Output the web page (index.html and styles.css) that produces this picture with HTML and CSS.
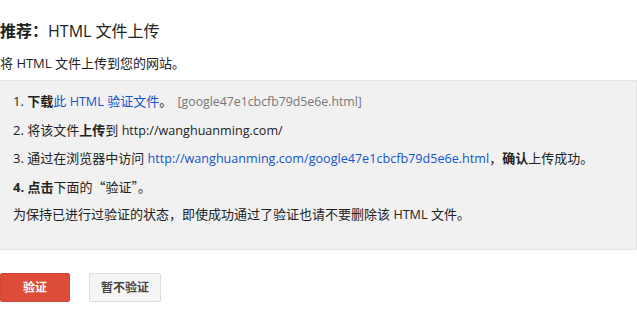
FILE: index.html
```html
<!DOCTYPE html>
<html lang="zh-CN">
<head>
<meta charset="utf-8">
<link rel="stylesheet" href="styles.css">
</head>
<body>
<div class="page">
  <h2 class="title"><b>推荐：</b>HTML 文件上传</h2>
  <p class="intro">将 HTML 文件上传到您的网站。</p>
  <div class="steps">
    <ol class="list">
      <li>1. <b>下载</b><a href="#">此 <span class="en">HTML</span> 验证文件</a>。 <span class="file en">[google47e1cbcfb79d5e6e.html]</span></li>
      <li>2. 将该文件<b>上传</b>到 <span class="en">http://wanghuanming.com/</span></li>
      <li>3. 通过在浏览器中访问 <a href="#" class="en">http://wanghuanming.com/google47e1cbcfb79d5e6e.html</a>，<b>确认</b>上传成功。</li>
      <li><b>4. 点击</b>下面的<span class="cjk">“验证”</span>。</li>
    </ol>
    <p class="note">为保持已进行过验证的状态，即使成功通过了验证也请不要删除该 <span class="en">HTML</span> 文件。</p>
  </div>
  <div class="actions">
    <button class="btn btn-primary">验证</button>
    <button class="btn btn-secondary">暂不验证</button>
  </div>
</div>
</body>
</html>
```

FILE: styles.css
```css
html, body {
  margin: 0;
  padding: 0;
  background: #fff;
}
body {
  font-family: "Open Sans", "Noto Sans CJK SC", sans-serif;
  color: #222;
  font-size: 13px;
}
.page {
  width: 637px;
}
.title {
  margin: 0;
  padding-top: 21px;
  font-size: 16px;
  line-height: 20px;
  font-weight: normal;
  color: #222;
}
.title b {
  font-weight: bold;
}
.intro {
  margin: 13px 0 0;
  line-height: 18px;
}
.steps {
  margin-top: 8px;
  background: #f1f1f1;
  border-top: 1px solid #e5e5e5;
  border-bottom: 1px solid #e5e5e5;
  border-right: 1px solid #e5e5e5;
  padding: 11px 0 26px 13px;
  font-size: 13px;
}
.list {
  list-style: none;
  margin: 0;
  padding: 0;
  display: flex;
  flex-direction: column;
  gap: 10.6px;
}
.list li {
  height: 18px;
  line-height: 18px;
}
.list a {
  color: #15c;
  text-decoration: none;
}
.en {
  font-size: 12.6px;
  line-height: 1;
}
.cjk {
  font-family: "Noto Sans CJK SC", sans-serif;
  line-height: 1;
}
.file {
  color: #777;
  font-size: 12.3px;
  margin-left: 2px;
}
.note {
  margin: 9px 0 0;
  height: 18px;
  line-height: 18px;
}
.actions {
  display: flex;
  gap: 19px;
  margin-top: 23px;
}
.btn {
  height: 29px;
  font-family: "Open Sans", "Noto Sans CJK SC", sans-serif;
  font-size: 12px;
  font-weight: bold;
  border-radius: 2px;
  padding: 0;
  line-height: 27px;
}
.btn-primary {
  width: 70px;
  background: #dd4b39;
  border: 1px solid #d14836;
  color: #fff;
}
.btn-secondary {
  width: 72px;
  background: #f5f5f5;
  border: 1px solid #dcdcdc;
  color: #444;
}
```
